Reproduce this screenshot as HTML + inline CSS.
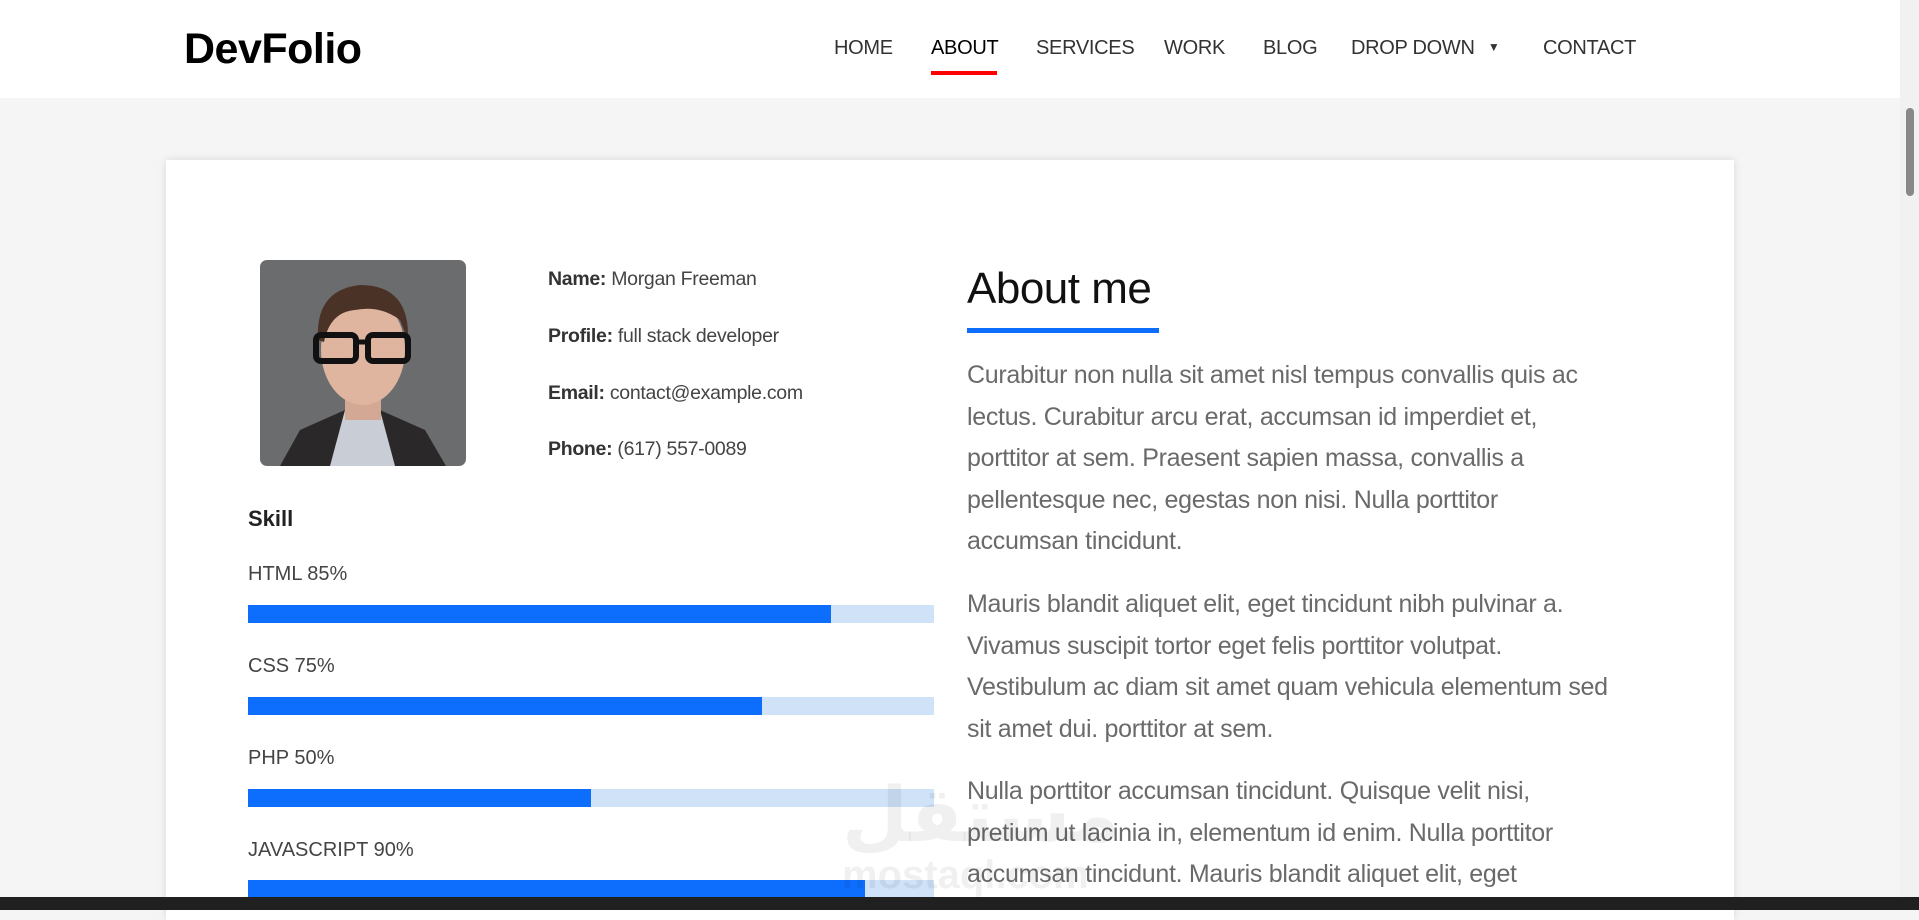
<!DOCTYPE html>
<html><head><meta charset="utf-8"><style>
*{margin:0;padding:0;box-sizing:border-box}
html,body{width:1919px;height:910px;overflow:hidden;background:#f5f5f5;font-family:"Liberation Sans",sans-serif}
.hdr{position:absolute;left:0;top:0;width:1900px;height:98px;background:#fff}
.logo{position:absolute;left:184px;top:25px;font-size:43px;font-weight:bold;color:#000;letter-spacing:-0.5px}
.nav a{position:absolute;top:37px;font-size:20px;color:#333;text-decoration:none;white-space:nowrap;letter-spacing:-0.3px}
.ul{position:absolute;left:931px;top:71px;width:66px;height:4px;background:#f00}
.card{position:absolute;left:166px;top:160px;width:1568px;height:760px;background:#fff;box-shadow:0 0 8px rgba(0,0,0,.12)}
.ph{position:absolute;left:260px;top:260px;width:206px;height:206px;border-radius:7px;overflow:hidden}
.info{position:absolute;left:548px;font-size:19.5px;color:#444;letter-spacing:-0.3px}
.info b{color:#333}
.lab{position:absolute;left:248px;font-size:20px;color:#444}
.bar{position:absolute;left:248px;width:686px;height:18px;background:#cfe2f8}
.bar i{display:block;height:100%;background:#0d6efd}
h2{position:absolute;left:967px;top:264px;font-size:44px;font-weight:normal;color:#111;letter-spacing:-0.5px}
.hu{position:absolute;left:967px;top:328px;width:192px;height:5px;background:#0d6efd}
.p{position:absolute;left:967px;font-size:25px;line-height:41.6px;color:#6a6a6a;white-space:nowrap;letter-spacing:-0.3px}
.sb{position:absolute;left:1900px;top:0;width:19px;height:897px;background:#f1f1f1}
.sb i{position:absolute;left:6px;top:108px;width:8px;height:88px;background:#888;border-radius:4px}
.tb{position:absolute;left:0;top:897px;width:1919px;height:13px;background:#202020}
.wm{position:absolute;left:842px;top:770px;font-size:76px;font-weight:bold;color:rgba(0,0,0,.06);font-family:"Liberation Sans","DejaVu Sans",sans-serif}
.wm2{position:absolute;left:842px;top:853px;font-size:40px;font-weight:bold;color:rgba(0,0,0,.06)}
</style></head><body>
<div class="hdr">
<div class="logo">DevFolio</div>
<div class="nav">
<a style="left:834px">HOME</a>
<a style="left:931px;color:#000">ABOUT</a>
<a style="left:1036px">SERVICES</a>
<a style="left:1164px">WORK</a>
<a style="left:1263px">BLOG</a>
<a style="left:1351px">DROP DOWN <span style="font-size:12px;vertical-align:3px;margin-left:8px">▼</span></a>
<a style="left:1543px">CONTACT</a>
</div>
<div class="ul"></div>
</div>
<div class="card"></div>
<div class="ph"><svg width="206" height="206" viewBox="0 0 206 206">
<rect width="206" height="206" fill="#6b6c6e"/>
<path d="M20 206 L40 170 L85 150 L120 150 L165 170 L186 206Z" fill="#2a2828"/>
<path d="M70 206 L85 150 L120 150 L135 206Z" fill="#c9cdd6"/>
<rect x="85" y="115" width="36" height="45" fill="#d3a894"/>
<ellipse cx="103" cy="90" rx="42" ry="55" fill="#e0b5a0"/>
<path d="M58 80 Q55 30 100 25 Q150 25 148 80 L140 60 Q120 45 95 50 Q70 52 64 82Z" fill="#4a3326"/>
<rect x="56" y="75" width="40" height="26" rx="5" fill="none" stroke="#111" stroke-width="6"/>
<rect x="108" y="75" width="40" height="26" rx="5" fill="none" stroke="#111" stroke-width="6"/>
<path d="M96 82 L108 82" stroke="#111" stroke-width="5"/>
</svg></div>
<div class="info" style="top:268px"><b>Name:</b> Morgan Freeman</div>
<div class="info" style="top:325px"><b>Profile:</b> full stack developer</div>
<div class="info" style="top:382px"><b>Email:</b> contact@example.com</div>
<div class="info" style="top:438px"><b>Phone:</b> (617) 557-0089</div>
<div class="lab" style="top:506px;font-size:22px;color:#222;font-weight:bold">Skill</div>
<div class="lab" style="top:563px">HTML 85%</div>
<div class="bar" style="top:605px"><i style="width:583px"></i></div>
<div class="lab" style="top:655px">CSS 75%</div>
<div class="bar" style="top:697px"><i style="width:514px"></i></div>
<div class="lab" style="top:747px">PHP 50%</div>
<div class="bar" style="top:789px"><i style="width:343px"></i></div>
<div class="lab" style="top:839px">JAVASCRIPT 90%</div>
<div class="bar" style="top:880px"><i style="width:617px"></i></div>
<h2>About me</h2>
<div class="hu"></div>
<div class="p" style="top:355px">Curabitur non nulla sit amet nisl tempus convallis quis ac<br>lectus. Curabitur arcu erat, accumsan id imperdiet et,<br>porttitor at sem. Praesent sapien massa, convallis a<br>pellentesque nec, egestas non nisi. Nulla porttitor<br>accumsan tincidunt.</div>
<div class="p" style="top:584px">Mauris blandit aliquet elit, eget tincidunt nibh pulvinar a.<br>Vivamus suscipit tortor eget felis porttitor volutpat.<br>Vestibulum ac diam sit amet quam vehicula elementum sed<br>sit amet dui. porttitor at sem.</div>
<div class="p" style="top:771px">Nulla porttitor accumsan tincidunt. Quisque velit nisi,<br>pretium ut lacinia in, elementum id enim. Nulla porttitor<br>accumsan tincidunt. Mauris blandit aliquet elit, eget</div>
<div class="wm">مستقل</div>
<div class="wm2">mostaql.com</div>
<div class="sb"><i></i></div>
<div class="tb"></div>
</body></html>
